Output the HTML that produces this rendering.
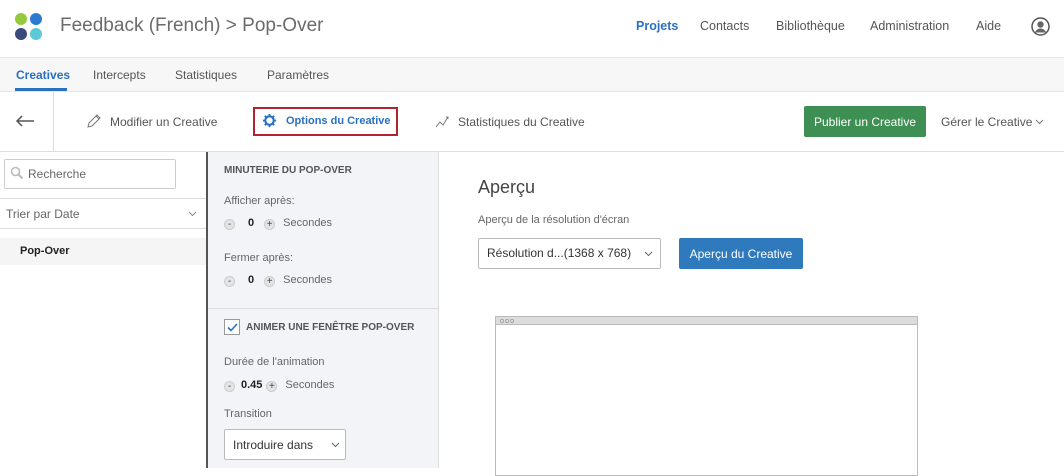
<!DOCTYPE html>
<html><head><meta charset="utf-8"><style>
*{margin:0;padding:0;box-sizing:border-box}
body{width:1064px;height:468px;overflow:hidden;background:#fff;font-family:"Liberation Sans",sans-serif;color:#555;position:relative}
.a{position:absolute;white-space:nowrap}
.c{display:inline-block;width:11px;height:11px;border-radius:50%;background:#e4e4e4;border:1px solid #ccc;text-align:center;line-height:9px;font-size:10px;vertical-align:-1px;color:#444}
.btn{display:flex;align-items:center;justify-content:center}
</style></head><body>
<div class="a" style="left:15px;top:13px;width:30px;height:30px">
<div class="a" style="left:0;top:0;width:12px;height:12px;border-radius:50%;background:#95c93d"></div>
<div class="a" style="left:15px;top:0;width:12px;height:12px;border-radius:50%;background:#2a7bd0"></div>
<div class="a" style="left:0;top:15px;width:12px;height:12px;border-radius:50%;background:#3b4a7a"></div>
<div class="a" style="left:15px;top:15px;width:12px;height:12px;border-radius:50%;background:#5ccad6"></div>
</div>
<div class="a" style="left:60px;top:15px;font-size:19px;color:#6b6b6b">Feedback (French) &gt; Pop-Over</div>
<div class="a" style="left:636px;top:19px;font-size:12.5px;color:#2a70c0;font-weight:bold">Projets</div>
<div class="a" style="left:700px;top:19px;font-size:12.5px;color:#555">Contacts</div>
<div class="a" style="left:776px;top:19px;font-size:12.5px;color:#555">Bibliothèque</div>
<div class="a" style="left:870px;top:19px;font-size:12.5px;color:#555">Administration</div>
<div class="a" style="left:976px;top:19px;font-size:12.5px;color:#555">Aide</div>
<svg class="a" style="left:1031px;top:17px" width="19" height="19" viewBox="0 0 19 19"><circle cx="9.5" cy="9.5" r="8.5" fill="none" stroke="#555" stroke-width="1.5"/><circle cx="9.5" cy="7.5" r="3.2" fill="#666"/><path d="M3.8 15.5c1.5-3 3.5-4 5.7-4s4.2 1 5.7 4" fill="#666"/></svg>
<div class="a" style="left:0;top:57px;width:1064px;height:35px;background:#f7f7f7;border-top:1px solid #e6e6e6;border-bottom:1px solid #e6e6e6"></div>
<div class="a" style="left:16px;top:68px;font-size:12px;color:#2a70c0;font-weight:bold">Creatives</div>
<div class="a" style="left:15px;top:88px;width:52px;height:3px;background:#2a70c0"></div>
<div class="a" style="left:93px;top:68px;font-size:12px;color:#555">Intercepts</div>
<div class="a" style="left:175px;top:68px;font-size:12px;color:#555">Statistiques</div>
<div class="a" style="left:267px;top:68px;font-size:12px;color:#555">Paramètres</div>
<div class="a" style="left:0;top:151px;width:1064px;height:1px;background:#ddd"></div>
<div class="a" style="left:53px;top:92px;width:1px;height:59px;background:#ddd"></div>
<svg class="a" style="left:15px;top:115px" width="20" height="12" viewBox="0 0 20 12"><path d="M19 6H2M7 1L2 6l5 5" fill="none" stroke="#555" stroke-width="1.5"/></svg>
<svg class="a" style="left:86px;top:113px" width="16" height="16" viewBox="0 0 16 16"><path d="M2 14l1-4 8-8 3 3-8 8z M10 3l3 3" fill="none" stroke="#777" stroke-width="1"/></svg>
<div class="a" style="left:110px;top:115px;font-size:12px;color:#555">Modifier un Creative</div>
<div class="a" style="left:253px;top:107px;width:145px;height:29px;border:2px solid #b32231"></div>
<svg class="a" style="left:262px;top:113px" width="15" height="15" viewBox="0 0 16 16"><circle cx="8" cy="8" r="4.5" fill="none" stroke="#2a70c0" stroke-width="2.2"/><path d="M8 1v3M8 12v3M1 8h3M12 8h3M3 3l2 2M11 11l2 2M13 3l-2 2M5 11l-2 2" stroke="#2a70c0" stroke-width="2"/></svg>
<div class="a" style="left:286px;top:115px;font-size:11px;color:#2a70c0;font-weight:bold">Options du Creative</div>
<svg class="a" style="left:435px;top:114px" width="16" height="14" viewBox="0 0 16 14"><path d="M1 13l4-5 3 3 5-8 M11 3l2 0 0 2" fill="none" stroke="#777" stroke-width="1"/></svg>
<div class="a" style="left:458px;top:115px;font-size:12px;color:#555">Statistiques du Creative</div>
<div class="a btn" style="left:804px;top:106px;width:122px;height:31px;background:#3d8f53;border-radius:2px;color:#fff;font-size:12px">Publier un Creative</div>
<div class="a" style="left:941px;top:115px;font-size:12px;color:#555">Gérer le Creative</div>
<svg class="a" style="left:1035px;top:119px" width="9" height="6" viewBox="0 0 9 6"><path d="M1 1l3.5 3.5L8 1" fill="none" stroke="#777"/></svg>
<div class="a" style="left:4px;top:159px;width:172px;height:30px;border:1px solid #ccc;border-radius:2px"></div>
<svg class="a" style="left:10px;top:166px" width="14" height="14" viewBox="0 0 14 14"><circle cx="5.5" cy="5.5" r="4" fill="none" stroke="#bbb" stroke-width="1.6"/><path d="M8.5 8.5l4 4" stroke="#bbb" stroke-width="2"/></svg>
<div class="a" style="left:28px;top:167px;font-size:12px;color:#666">Recherche</div>
<div class="a" style="left:0;top:198px;width:206px;height:1px;background:#ddd"></div>
<div class="a" style="left:6px;top:207px;font-size:12px;color:#666">Trier par Date</div>
<svg class="a" style="left:188px;top:211px" width="9" height="6" viewBox="0 0 9 6"><path d="M1 1l3.5 3.5L8 1" fill="none" stroke="#888"/></svg>
<div class="a" style="left:0;top:228px;width:206px;height:1px;background:#ddd"></div>
<div class="a" style="left:0;top:238px;width:206px;height:27px;background:#f5f5f5"></div>
<div class="a" style="left:20px;top:245px;font-size:11px;color:#222;font-weight:bold">Pop-Over</div>
<div class="a" style="left:206px;top:152px;width:233px;height:316px;background:#f2f4f7;border-left:2px solid #555;border-right:1px solid #ddd"></div>
<div class="a" style="left:224px;top:165px;font-size:10px;color:#555;font-weight:bold">MINUTERIE DU POP-OVER</div>
<div class="a" style="left:224px;top:195px;font-size:11px;color:#666">Afficher après:</div>
<div class="a" style="left:224px;top:217px;font-size:11px;color:#666"><span class="c">-</span><b style="color:#222;margin:0 10px 0 13px">0</b><span class="c">+</span><span style="margin-left:8px">Secondes</span></div>
<div class="a" style="left:224px;top:252px;font-size:11px;color:#666">Fermer après:</div>
<div class="a" style="left:224px;top:274px;font-size:11px;color:#666"><span class="c">-</span><b style="color:#222;margin:0 10px 0 13px">0</b><span class="c">+</span><span style="margin-left:8px">Secondes</span></div>
<div class="a" style="left:208px;top:308px;width:230px;height:1px;background:#ddd"></div>
<div class="a" style="left:224px;top:319px;width:16px;height:16px;border:1px solid #999;background:#fff"></div>
<svg class="a" style="left:227px;top:323px" width="11" height="9" viewBox="0 0 11 9"><path d="M1 4.5l3 3L10 1" fill="none" stroke="#2a70c0" stroke-width="1.6"/></svg>
<div class="a" style="left:246px;top:322px;font-size:10px;color:#555;font-weight:bold">ANIMER UNE FENÊTRE POP-OVER</div>
<div class="a" style="left:224px;top:356px;font-size:11px;color:#666">Durée de l'animation</div>
<div class="a" style="left:224px;top:379px;font-size:11px;color:#666"><span class="c">-</span><b style="color:#222;margin:0 4px 0 6px">0.45</b><span class="c">+</span><span style="margin-left:8px">Secondes</span></div>
<div class="a" style="left:224px;top:408px;font-size:11px;color:#666">Transition</div>
<div class="a" style="left:224px;top:429px;width:122px;height:31px;border:1px solid #bbb;border-radius:2px;background:#fff"></div>
<div class="a" style="left:233px;top:438px;font-size:12px;color:#333">Introduire dans</div>
<svg class="a" style="left:331px;top:442px" width="9" height="6" viewBox="0 0 9 6"><path d="M1 1l3.5 3.5L8 1" fill="none" stroke="#666"/></svg>
<div class="a" style="left:478px;top:177px;font-size:18px;color:#444">Aperçu</div>
<div class="a" style="left:478px;top:214px;font-size:11px;color:#666">Aperçu de la résolution d'écran</div>
<div class="a" style="left:478px;top:238px;width:183px;height:31px;border:1px solid #bbb;border-radius:2px"></div>
<div class="a" style="left:487px;top:246px;font-size:12px;color:#333">Résolution d...(1368 x 768)</div>
<svg class="a" style="left:644px;top:251px" width="9" height="6" viewBox="0 0 9 6"><path d="M1 1l3.5 3.5L8 1" fill="none" stroke="#666"/></svg>
<div class="a btn" style="left:679px;top:238px;width:124px;height:31px;background:#2f79bd;border-radius:2px;color:#fff;font-size:12px">Aperçu du Creative</div>
<div class="a" style="left:495px;top:316px;width:423px;height:160px;border:1px solid #bbb;background:#fff"></div>
<div class="a" style="left:496px;top:317px;width:421px;height:8px;background:#dcdcdc;border-bottom:1px solid #bbb"></div>
<svg class="a" style="left:499px;top:318px" width="18" height="6" viewBox="0 0 18 6"><circle cx="3" cy="3" r="1.6" fill="none" stroke="#999" stroke-width=".7"/><circle cx="8" cy="3" r="1.6" fill="none" stroke="#999" stroke-width=".7"/><circle cx="13" cy="3" r="1.6" fill="none" stroke="#999" stroke-width=".7"/></svg>
</body></html>
